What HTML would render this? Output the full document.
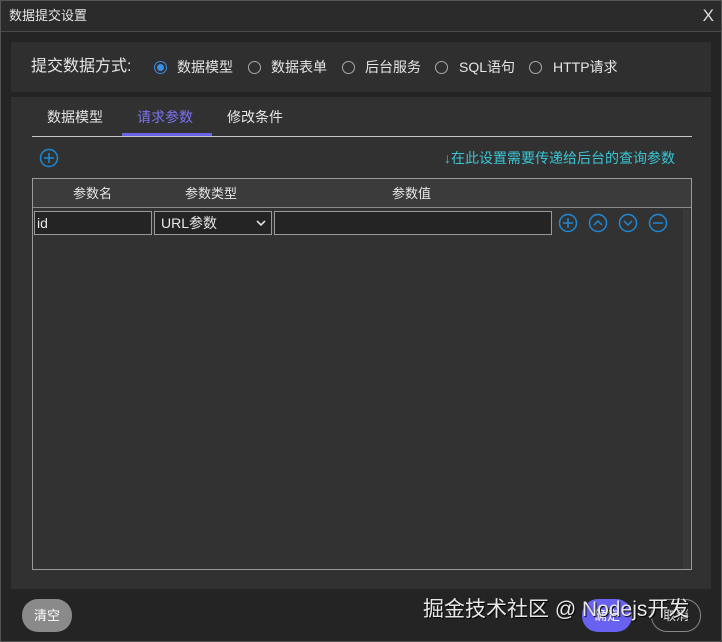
<!DOCTYPE html>
<html><head><meta charset="utf-8"><style>
*{margin:0;padding:0;box-sizing:border-box}
body{width:722px;height:642px;background:#242424;font-family:"Liberation Sans","Noto Sans CJK SC",sans-serif;color:#e6e6e6;position:relative;overflow:hidden;border:1px solid #555}
.abs{position:absolute}
.title{left:0;top:0;width:720px;height:31px;background:#2b2b2b;border-bottom:1px solid #4a4a4a;font-size:13px;line-height:30px;padding-left:8px}
.x{right:7px;top:0;font-size:17px;line-height:30px;color:#ddd}
.p1{left:10px;top:41px;width:700px;height:50px;background:#2f2f2f}
.radio{position:absolute;top:19px;width:13px;height:13px;border:1px solid #aaa;border-radius:50%}
.radio.on{border-color:#3c8fe0}
.radio.on:after{content:"";position:absolute;left:2px;top:2px;width:7px;height:7px;border-radius:50%;background:#3c8fe0}
.rl{position:absolute;top:15px;font-size:14px;line-height:20px;white-space:nowrap}
.ico{position:absolute;width:20px;height:20px}
</style></head><body>
<div class="abs title">数据提交设置</div>
<div class="abs x">X</div>
<div class="abs p1">
 <div class="abs" style="left:20px;top:15px;font-size:16px;line-height:20px">提交数据方式:</div>
 <span class="radio on" style="left:143px"></span><span class="rl" style="left:166px">数据模型</span>
 <span class="radio" style="left:237px"></span><span class="rl" style="left:260px">数据表单</span>
 <span class="radio" style="left:331px"></span><span class="rl" style="left:354px">后台服务</span>
 <span class="radio" style="left:424px"></span><span class="rl" style="left:448px">SQL语句</span>
 <span class="radio" style="left:518px"></span><span class="rl" style="left:542px">HTTP请求</span>
</div>
<div class="abs" style="left:10px;top:96px;width:700px;height:492px;background:#313131"></div>
<div class="abs" style="left:46px;top:106px;font-size:14px;line-height:20px">数据模型</div>
<div class="abs" style="left:136px;top:106px;font-size:14px;line-height:20px;color:#7b72f0">请求参数</div>
<div class="abs" style="left:226px;top:106px;font-size:14px;line-height:20px">修改条件</div>
<div class="abs" style="left:31px;top:135px;width:660px;height:1px;background:#c8c8c8"></div>
<div class="abs" style="left:121px;top:132px;width:90px;height:3px;background:#6b63e6"></div>
<svg class="ico" style="left:38px;top:147px" viewBox="0 0 20 20"><circle cx="10" cy="10" r="8.5" fill="none" stroke="#1e88d4" stroke-width="1.5"/><path d="M10 5v10M5 10h10" stroke="#1e88d4" stroke-width="1.5"/></svg>
<div class="abs" style="left:443px;top:147px;font-size:14px;line-height:20px;color:#3ac4d4;white-space:nowrap">↓在此设置需要传递给后台的查询参数</div>
<div class="abs" style="left:31px;top:177px;width:660px;height:392px;border:1px solid #9a9a9a;background:#323232"></div>
<div class="abs" style="left:32px;top:178px;width:658px;height:29px;background:#3b3b3b;border-bottom:1px solid #8a8a8a"></div>
<div class="abs" style="left:682px;top:208px;width:7px;height:360px;background:#393939"></div>
<div class="abs" style="left:72px;top:184px;font-size:13px;line-height:18px">参数名</div>
<div class="abs" style="left:184px;top:184px;font-size:13px;line-height:18px">参数类型</div>
<div class="abs" style="left:391px;top:184px;font-size:13px;line-height:18px">参数值</div>
<div class="abs" style="left:33px;top:210px;width:118px;height:24px;border:1px solid #999;background:#242424;font-size:14px;line-height:22px;padding-left:2px">id</div>
<div class="abs" style="left:153px;top:210px;width:118px;height:24px;border:1px solid #999;background:#242424;font-size:14px;line-height:22px;padding-left:6px">URL参数<svg style="position:absolute;right:5px;top:8px" width="10" height="7" viewBox="0 0 10 7"><path d="M1 1l4 4 4-4" fill="none" stroke="#ddd" stroke-width="1.6"/></svg></div>
<div class="abs" style="left:273px;top:210px;width:278px;height:24px;border:1px solid #999;background:#242424"></div>
<svg class="ico" style="left:557px;top:212px" viewBox="0 0 20 20"><circle cx="10" cy="10" r="8.5" fill="none" stroke="#1e88d4" stroke-width="1.5"/><path d="M10 5v10M5 10h10" stroke="#1e88d4" stroke-width="1.5"/></svg>
<svg class="ico" style="left:587px;top:212px" viewBox="0 0 20 20"><circle cx="10" cy="10" r="8.5" fill="none" stroke="#1e88d4" stroke-width="1.5"/><path d="M6 12l4-4 4 4" fill="none" stroke="#1e88d4" stroke-width="1.5"/></svg>
<svg class="ico" style="left:617px;top:212px" viewBox="0 0 20 20"><circle cx="10" cy="10" r="8.5" fill="none" stroke="#1e88d4" stroke-width="1.5"/><path d="M6 8l4 4 4-4" fill="none" stroke="#1e88d4" stroke-width="1.5"/></svg>
<svg class="ico" style="left:647px;top:212px" viewBox="0 0 20 20"><circle cx="10" cy="10" r="8.5" fill="none" stroke="#1e88d4" stroke-width="1.5"/><path d="M5 10h10" stroke="#1e88d4" stroke-width="1.5"/></svg>
<div class="abs" style="left:21px;top:598px;width:50px;height:33px;border-radius:16px;background:#8a8a8a;font-size:13px;line-height:33px;text-align:center;color:#fff">清空</div>
<div class="abs" style="left:581px;top:598px;width:50px;height:33px;border-radius:16px;background:#6962f0;font-size:13px;line-height:33px;text-align:center;color:#fff">确定</div>
<div class="abs" style="left:650px;top:598px;width:50px;height:33px;border-radius:16px;border:1px solid #888;font-size:13px;line-height:31px;text-align:center;color:#ddd">取消</div>
<div class="abs" style="left:422px;top:595px;font-size:21px;line-height:28px;color:#e8e8e8;text-shadow:1px 1px 1px #000;white-space:nowrap">掘金技术社区 @ Nodejs开发</div>
</body></html>
